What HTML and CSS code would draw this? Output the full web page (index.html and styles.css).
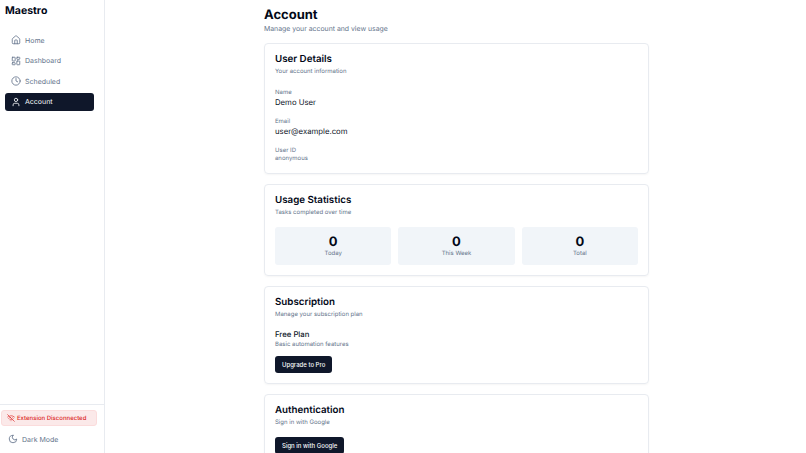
FILE: index.html
```html
<!DOCTYPE html>
<html lang="en">
<head>
    <meta charset="UTF-8">
    <meta name="viewport" content="width=device-width, initial-scale=1.0">
    <title>Maestro - Account</title>
    <link rel="stylesheet" href="styles.css">
</head>
<body>
    <div class="app">
        <aside class="sidebar">
            <div class="brand">Maestro</div>
            <nav class="nav">
                <a class="nav-item">
                    <svg class="icon" viewBox="0 0 24 24"><path d="M15 21v-8a1 1 0 0 0-1-1h-4a1 1 0 0 0-1 1v8"/><path d="M3 10a2 2 0 0 1 .709-1.528l7-5.999a2 2 0 0 1 2.582 0l7 5.999A2 2 0 0 1 21 10v9a2 2 0 0 1-2 2H5a2 2 0 0 1-2-2z"/></svg>
                    Home
                </a>
                <a class="nav-item">
                    <svg class="icon" viewBox="0 0 24 24"><rect x="3" y="3" width="7" height="9" rx="1"/><rect x="14" y="3" width="7" height="5" rx="1"/><rect x="14" y="12" width="7" height="9" rx="1"/><rect x="3" y="16" width="7" height="5" rx="1"/></svg>
                    Dashboard
                </a>
                <a class="nav-item">
                    <svg class="icon" viewBox="0 0 24 24"><circle cx="12" cy="12" r="10"/><polyline points="12 6 12 12 16 14"/></svg>
                    Scheduled
                </a>
                <a class="nav-item active">
                    <svg class="icon" viewBox="0 0 24 24"><path d="M19 21v-2a4 4 0 0 0-4-4H9a4 4 0 0 0-4 4v2"/><circle cx="12" cy="7" r="4"/></svg>
                    Account
                </a>
            </nav>
            <div class="sidebar-footer">
                <div class="status">
                    <svg class="icon-small" viewBox="0 0 24 24"><path d="M12 20h.01"/><path d="M8.5 16.429a5 5 0 0 1 7 0"/><path d="M5 12.859a10 10 0 0 1 5.17-2.69"/><path d="M19 12.859a10 10 0 0 0-2.007-1.523"/><path d="M2 8.82a15 15 0 0 1 4.177-2.643"/><path d="M22 8.82a15 15 0 0 0-11.288-3.764"/><path d="m2 2 20 20"/></svg>
                    Extension Disconnected
                </div>
                <a class="theme-toggle">
                    <svg class="icon" viewBox="0 0 24 24"><path d="M12 3a6 6 0 0 0 9 9 9 9 0 1 1-9-9Z"/></svg>
                    Dark Mode
                </a>
            </div>
        </aside>
        <main class="main">
            <div class="content">
                <h1>Account</h1>
                <p class="page-sub">Manage your account and view usage</p>

                <section class="card">
                    <h2>User Details</h2>
                    <p class="card-sub">Your account information</p>
                    <div class="field">
                        <div class="field-label">Name</div>
                        <div class="field-value">Demo User</div>
                    </div>
                    <div class="field">
                        <div class="field-label">Email</div>
                        <div class="field-value">user@example.com</div>
                    </div>
                    <div class="field">
                        <div class="field-label">User ID</div>
                        <div class="field-small">anonymous</div>
                    </div>
                </section>

                <section class="card">
                    <h2>Usage Statistics</h2>
                    <p class="card-sub">Tasks completed over time</p>
                    <div class="stats">
                        <div class="stat"><div class="stat-num">0</div><div class="stat-label">Today</div></div>
                        <div class="stat"><div class="stat-num">0</div><div class="stat-label">This Week</div></div>
                        <div class="stat"><div class="stat-num">0</div><div class="stat-label">Total</div></div>
                    </div>
                </section>

                <section class="card">
                    <h2>Subscription</h2>
                    <p class="card-sub">Manage your subscription plan</p>
                    <div class="plan">Free Plan</div>
                    <p class="plan-sub">Basic automation features</p>
                    <button class="btn" type="button">Upgrade to Pro</button>
                </section>

                <section class="card">
                    <h2>Authentication</h2>
                    <p class="card-sub">Sign in with Google</p>
                    <button class="btn" type="button">Sign in with Google</button>
                </section>
            </div>
        </main>
    </div>
</body>
</html>
```
FILE: styles.css
```css
* {
    box-sizing: border-box;
}
body {
    margin: 0;
    font-family: Inter, "Liberation Sans", sans-serif;
    text-rendering: geometricPrecision;
    color: #0f172a;
    background-color: #fff;
    overflow: hidden;
}
.app {
    display: flex;
    height: 453px;
}
.sidebar {
    width: 105px;
    flex-shrink: 0;
    display: flex;
    flex-direction: column;
    border-right: 1px solid #e8ebf0;
}
.brand {
    padding: 3px 5px 0;
    font-size: 10.5px;
    line-height: 15px;
    font-weight: 700;
    color: #020817;
}
.nav {
    display: flex;
    flex-direction: column;
    gap: 3px;
    padding: 13.5px 10px 0 5px;
}
.nav-item {
    display: flex;
    align-items: center;
    gap: 4px;
    height: 17.5px;
    padding: 0 6px;
    border-radius: 3px;
    font-size: 7px;
    color: #64748b;
}
.nav-item.active {
    background-color: #0f172a;
    color: #f8fafc;
}
.icon {
    width: 10px;
    height: 10px;
    flex-shrink: 0;
    fill: none;
    stroke: currentColor;
    stroke-width: 2;
    stroke-linecap: round;
    stroke-linejoin: round;
}
.icon-small {
    width: 8px;
    height: 8px;
    flex-shrink: 0;
    fill: none;
    stroke: currentColor;
    stroke-width: 2;
    stroke-linecap: round;
    stroke-linejoin: round;
}
.sidebar-footer {
    margin-top: auto;
    border-top: 1px solid #e8ebf0;
    padding: 5px 0 0;
    height: 49px;
}
.status {
    display: flex;
    align-items: center;
    gap: 2.5px;
    height: 16px;
    margin: 0 7px 0 1px;
    padding: 0 4.5px;
    border-radius: 3px;
    background-color: #fbe9e9;
    border: 1px solid #fbdcdc;
    color: #dc2626;
    font-size: 6px;
    font-weight: 500;
    white-space: nowrap;
}
.theme-toggle {
    display: flex;
    align-items: center;
    gap: 4px;
    padding: 8px 8px 0;
    font-size: 7px;
    color: #64748b;
}
.main {
    flex: 1;
    overflow: hidden;
}
.content {
    width: 385px;
    margin-left: 159px;
    padding-top: 8px;
}
h1 {
    margin: 0;
    font-size: 13px;
    line-height: 15px;
    font-weight: 700;
    color: #020817;
}
.page-sub {
    margin: 1px 0 10px;
    font-size: 6.9px;
    line-height: 9px;
    color: #64748b;
}
.card {
    border: 1px solid #e8ebf0;
    border-radius: 4px;
    padding: 10px;
    margin-bottom: 10px;
    box-shadow: 0 1px 2px rgba(0, 0, 0, 0.04);
}
h2 {
    margin: 0;
    font-size: 9.75px;
    line-height: 12px;
    font-weight: 600;
    color: #020817;
}
.card-sub {
    margin: 2px 0 10px;
    font-size: 6px;
    line-height: 8px;
    color: #64748b;
}
.field {
    margin-top: 10px;
}
.card-sub + .field {
    margin-top: 12px;
}
.field-label {
    font-size: 6px;
    line-height: 9px;
    color: #64748b;
}
.field-value {
    font-size: 7.75px;
    line-height: 10px;
    color: #0f172a;
}
.field-small {
    font-size: 6px;
    line-height: 8px;
    color: #64748b;
}
.stats {
    display: grid;
    grid-template-columns: repeat(3, 1fr);
    gap: 7px;
}
.stat {
    height: 37.5px;
    padding-top: 7.5px;
    border-radius: 3px;
    background-color: #f1f5f9;
    text-align: center;
}
.stat-num {
    font-size: 13px;
    line-height: 14px;
    font-weight: 700;
    color: #020817;
}
.stat-label {
    margin-top: 1px;
    font-size: 6px;
    line-height: 8px;
    color: #64748b;
}
.plan {
    font-size: 7.75px;
    line-height: 10px;
    font-weight: 500;
    color: #0f172a;
}
.plan-sub {
    margin: 2px 0 7px;
    font-size: 6px;
    line-height: 8px;
    color: #64748b;
}
.btn {
    display: block;
    height: 17px;
    padding: 0 7px;
    border: none;
    border-radius: 3px;
    background-color: #0f172a;
    color: #f8fafc;
    font-family: inherit;
    font-size: 6px;
    font-weight: 500;
}
```
